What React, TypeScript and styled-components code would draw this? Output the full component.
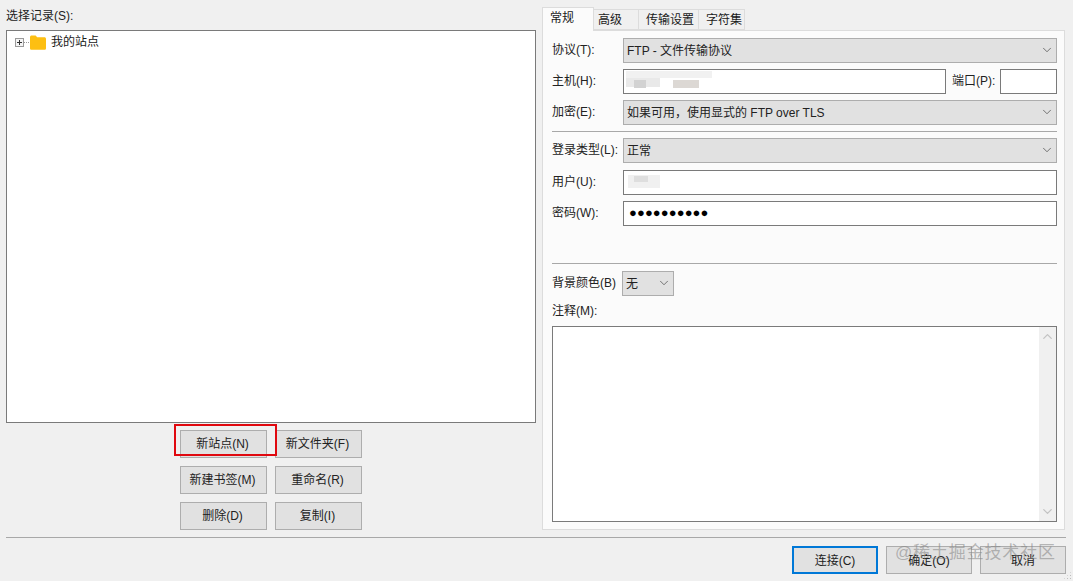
import { createGlobalStyle, styled } from "styled-components";
import { ChevronDown, ChevronUp } from "lucide-react";

const GlobalStyle = createGlobalStyle`
  html, body {
    margin: 0;
    padding: 0;
    background: #f0f0f0;
  }
  body {
    font-family: "Liberation Sans", "Noto Sans CJK SC", sans-serif;
    font-size: 12px;
    color: #1a1a1a;
  }
`;

const Page = styled.div`
  position: relative;
  width: 1073px;
  height: 581px;
  overflow: hidden;
  background: #f0f0f0;
  box-sizing: border-box;
  padding: 0 7px 0 6px;
`;

const Main = styled.div`
  display: grid;
  grid-template-columns: 530px 523px;
  column-gap: 6px;
  height: 529px;
`;

const LeftColumn = styled.div`
  display: flex;
  flex-direction: column;
`;

const Label = styled.div`
  line-height: 16px;
  white-space: nowrap;
  color: #222;
`;

const TreeLabel = styled(Label)`
  height: 30px;
  padding-top: 8px;
  box-sizing: border-box;
`;

const Tree = styled.div`
  height: 393px;
  box-sizing: border-box;
  background: #fff;
  border: 1px solid #7a7a7a;
  padding: 3px 8px;
`;

const TreeRow = styled.div`
  display: flex;
  align-items: center;
  height: 16px;
`;

const Expander = styled.span`
  position: relative;
  width: 7px;
  height: 7px;
  border: 1px solid #9a9a9a;
  background: #f4f4f4;
  &::before {
    content: "";
    position: absolute;
    left: 1px;
    right: 1px;
    top: 3px;
    height: 1px;
    background: #333;
  }
  &::after {
    content: "";
    position: absolute;
    top: 1px;
    bottom: 1px;
    left: 3px;
    width: 1px;
    background: #333;
  }
`;

const TreeLine = styled.span`
  width: 5px;
  margin: 0 1px 0 0;
  border-top: 1px dotted #999;
`;

const TreeName = styled.span`
  margin-left: 5px;
  line-height: 16px;
`;

const ActionGrid = styled.div`
  display: grid;
  grid-template-columns: 87px 87px;
  grid-auto-rows: 28px;
  gap: 8px;
  justify-content: start;
  margin: 7px 0 0 174px;
`;

const Button = styled.button<{ $primary?: boolean }>`
  box-sizing: border-box;
  height: 28px;
  padding: 0 2px 4px 0;
  background: #e1e1e1;
  border: ${(p) => (p.$primary ? "2px solid #0078d7" : "1px solid #adadad")};
  font: inherit;
  color: #222;
`;

const RightPanel = styled.div`
  display: flex;
  flex-direction: column;
`;

const Tabs = styled.div`
  display: flex;
  align-items: flex-end;
  height: 30px;
`;

const Tab = styled.div<{ $active?: boolean; $width: number; $inset: number }>`
  box-sizing: border-box;
  width: ${(p) => p.$width}px;
  height: ${(p) => (p.$active ? 24 : 21)}px;
  margin-bottom: ${(p) => (p.$active ? -1 : 0)}px;
  padding-left: ${(p) => p.$inset}px;
  line-height: ${(p) => (p.$active ? 21 : 20)}px;
  background: ${(p) => (p.$active ? "#fbfbfb" : "#f0f0f0")};
  border: 1px solid #dcdcdc;
  border-bottom: ${(p) => (p.$active ? "none" : "1px solid #dcdcdc")};
  border-left: ${(p) => (p.$active ? "1px solid #dcdcdc" : "none")};
  position: relative;
  z-index: ${(p) => (p.$active ? 1 : 0)};
`;

const Panel = styled.div`
  flex: 1;
  display: flex;
  flex-direction: column;
  box-sizing: border-box;
  background: #fbfbfb;
  border: 1px solid #dcdcdc;
  padding: 7px 7px 7px 9px;
`;

const FieldRow = styled.div<{ $gap?: number }>`
  display: grid;
  grid-template-columns: 71px 1fr;
  align-items: center;
  height: 25px;
  margin-bottom: ${(p) => p.$gap ?? 6}px;
  & > ${Label} {
    padding-bottom: 2px;
  }
`;

const HostFields = styled.div`
  display: grid;
  grid-template-columns: 323px 54px 57px;
  align-items: center;
`;

const PortLabel = styled(Label)`
  padding: 0 0 2px 6px;
`;

const Combo = styled.div<{ $width?: number }>`
  display: flex;
  align-items: center;
  justify-content: space-between;
  box-sizing: border-box;
  height: 25px;
  width: ${(p) => (p.$width ? `${p.$width}px` : "auto")};
  padding: 0 2px 2px 3px;
  background: #e1e1e1;
  border: 1px solid #adadad;
  color: #222;
  white-space: nowrap;
`;

const TextBox = styled.div`
  position: relative;
  box-sizing: border-box;
  height: 25px;
  background: #fff;
  border: 1px solid #7a7a7a;
  padding-left: 5px;
  line-height: 22px;
`;

const Dots = styled.span`
  font-size: 13px;
  letter-spacing: 0.1px;
  color: #000;
`;

const Divider = styled.div`
  height: 1px;
  background: #a8a8a8;
  margin: 0 0 6px;
`;

const PasswordSpacer = styled.div`
  height: 31px;
`;

const ColorRow = styled.div`
  display: flex;
  align-items: center;
  height: 25px;
  margin-top: 1px;
`;

const ColorLabel = styled(Label)`
  width: 70px;
  padding-bottom: 2px;
`;

const NotesLabel = styled(Label)`
  margin: 7px 0 7px;
`;

const Notes = styled.div`
  flex: 1;
  display: flex;
  justify-content: flex-end;
  box-sizing: border-box;
  background: #fff;
  border: 1px solid #7a7a7a;
`;

const Scrollbar = styled.div`
  width: 17px;
  display: flex;
  flex-direction: column;
  justify-content: space-between;
  align-items: center;
  background: #f0f0f0;
  padding: 2px 0;
  color: #c2c2c2;
`;

const Footer = styled.div`
  border-top: 1px solid #a8a8a8;
  margin-top: 8px;
  padding-top: 8px;
  display: flex;
  justify-content: flex-end;
  gap: 8px;
`;

const FooterButton = styled(Button)`
  width: 86px;
  padding: 0 0 2px;
`;

const Highlight = styled.div`
  position: absolute;
  left: 174px;
  top: 424px;
  width: 103px;
  height: 32px;
  box-sizing: border-box;
  border: 2px solid #e0080f;
`;

const Blur = styled.span<{ $x: number; $y: number; $w: number; $h: number; $tone: string }>`
  position: absolute;
  left: ${(p) => p.$x}px;
  top: ${(p) => p.$y}px;
  width: ${(p) => p.$w}px;
  height: ${(p) => p.$h}px;
  background: ${(p) => p.$tone};
  filter: blur(0.6px);
`;

const Watermark = styled.div`
  position: absolute;
  left: 895px;
  top: 542px;
  font-size: 17px;
  line-height: 22px;
  letter-spacing: 0.85px;
  color: rgba(130, 130, 130, 0.55);
  white-space: nowrap;
`;

const Grip = styled.div`
  position: absolute;
  right: 1px;
  bottom: 1px;
  width: 9px;
  height: 9px;
  background-image: radial-gradient(circle, #bdbdbd 1px, transparent 1px);
  background-size: 3px 3px;
  clip-path: polygon(100% 0, 100% 100%, 0 100%);
`;

function FolderIcon() {
  return (
    <svg width="16" height="15" viewBox="0 0 16 15" style={{ display: "block" }}>
      <path d="M0 2.2C0 1.2.7.5 1.6.5h4L7.2 2.2h7.2c.9 0 1.6.7 1.6 1.6v9.4c0 .9-.7 1.6-1.6 1.6H1.6C.7 14.8 0 14.1 0 13.2z" fill="#fdbf12" />
    </svg>
  );
}

function Arrow() {
  return <ChevronDown size={14} strokeWidth={1.2} color="#444" />;
}

export default function App() {
  return (
    <Page>
      <GlobalStyle />
      <Main>
        <LeftColumn>
          <TreeLabel>选择记录(S):</TreeLabel>
          <Tree>
            <TreeRow>
              <Expander />
              <TreeLine />
              <FolderIcon />
              <TreeName>我的站点</TreeName>
            </TreeRow>
          </Tree>
          <ActionGrid>
            <Button>新站点(N)</Button>
            <Button>新文件夹(F)</Button>
            <Button>新建书签(M)</Button>
            <Button>重命名(R)</Button>
            <Button>删除(D)</Button>
            <Button>复制(I)</Button>
          </ActionGrid>
        </LeftColumn>

        <RightPanel>
          <Tabs>
            <Tab $active $width={52} $inset={7}>常规</Tab>
            <Tab $width={45} $inset={4}>高级</Tab>
            <Tab $width={60} $inset={7}>传输设置</Tab>
            <Tab $width={46} $inset={7}>字符集</Tab>
          </Tabs>
          <Panel>
            <FieldRow>
              <Label>协议(T):</Label>
              <Combo>FTP - 文件传输协议<Arrow /></Combo>
            </FieldRow>
            <FieldRow>
              <Label>主机(H):</Label>
              <HostFields>
                <TextBox />
                <PortLabel>端口(P):</PortLabel>
                <TextBox />
              </HostFields>
            </FieldRow>
            <FieldRow>
              <Label>加密(E):</Label>
              <Combo>如果可用，使用显式的 FTP over TLS<Arrow /></Combo>
            </FieldRow>
            <Divider />
            <FieldRow $gap={7}>
              <Label>登录类型(L):</Label>
              <Combo>正常<Arrow /></Combo>
            </FieldRow>
            <FieldRow>
              <Label>用户(U):</Label>
              <TextBox />
            </FieldRow>
            <FieldRow>
              <Label>密码(W):</Label>
              <TextBox><Dots>●●●●●●●●●●</Dots></TextBox>
            </FieldRow>
            <PasswordSpacer />
            <Divider />
            <ColorRow>
              <ColorLabel>背景颜色(B)</ColorLabel>
              <Combo $width={52}>无<Arrow /></Combo>
            </ColorRow>
            <NotesLabel>注释(M):</NotesLabel>
            <Notes>
              <Scrollbar>
                <ChevronUp size={15} strokeWidth={2} />
                <ChevronDown size={15} strokeWidth={2} />
              </Scrollbar>
            </Notes>
          </Panel>
        </RightPanel>
      </Main>
      <Footer>
        <FooterButton $primary>连接(C)</FooterButton>
        <FooterButton>确定(O)</FooterButton>
        <FooterButton>取消</FooterButton>
      </Footer>

      <Highlight />
      <Blur $x={626} $y={71} $w={86} $h={7} $tone="#f1f1f1" />
      <Blur $x={626} $y={78} $w={34} $h={9} $tone="#e9e9e9" />
      <Blur $x={634} $y={80} $w={12} $h={8} $tone="#d2d2d2" />
      <Blur $x={673} $y={80} $w={26} $h={8} $tone="#dcd8d4" />
      <Blur $x={628} $y={175} $w={32} $h={13} $tone="#f0f0f0" />
      <Blur $x={634} $y={176} $w={14} $h={6} $tone="#dedede" />
      <Watermark>@稀土掘金技术社区</Watermark>
      <Grip />
    </Page>
  );
}
